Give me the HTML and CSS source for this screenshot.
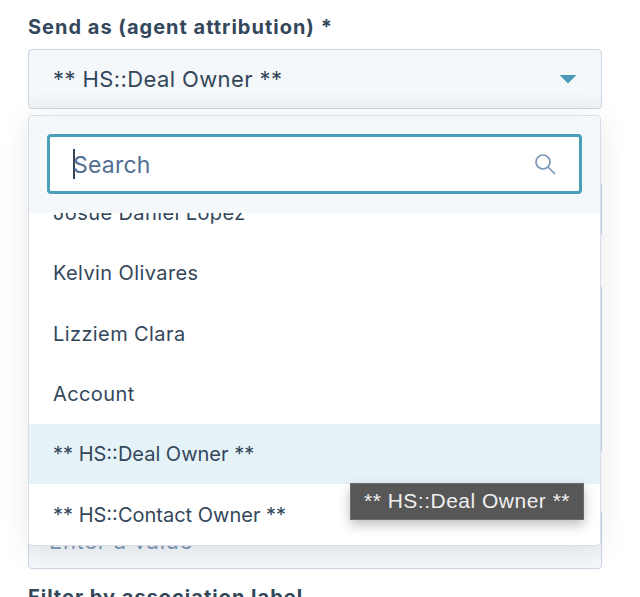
FILE: index.html
```html
<!DOCTYPE html>
<html lang="en">
<head>
<meta charset="utf-8">
<title>Send as</title>
<link rel="stylesheet" href="styles.css">
</head>
<body>
<main class="form">
  <div class="field">
    <label class="label">Send as (agent attribution) *</label>
    <div class="select">
      <span>** HS::Deal Owner **</span>
      <svg class="caret" width="18" height="10" viewBox="0 0 18 10"><path d="M0.5 1h17L9 9.5z" fill="#4a9cb6"/></svg>
    </div>
  </div>
  <div class="under">
    <div class="under-box short"></div>
    <div class="under-box tall"></div>
    <div class="under-box value"><span class="placeholder">Enter a value</span></div>
  </div>
  <label class="label last">Filter by association label</label>
</main>

<div class="dropdown">
  <div class="search-wrap">
    <div class="search">
      <span class="cursor"></span>
      <span class="search-text">Search</span>
      <svg class="search-icon" width="24" height="24" viewBox="0 0 24 24" fill="none" stroke="#7c98b6" stroke-width="1.7"><circle cx="10" cy="10" r="7"/><path d="M15 15l7 7"/></svg>
    </div>
  </div>
  <ul class="list">
    <li class="item">Josue Daniel Lopez</li>
    <li class="item">Kelvin Olivares</li>
    <li class="item">Lizziem Clara</li>
    <li class="item">Account</li>
    <li class="item owner active">** HS::Deal Owner **</li>
    <li class="item owner">** HS::Contact Owner **</li>
  </ul>
</div>
<div class="tooltip">** HS::Deal Owner **</div>
</body>
</html>
```
FILE: styles.css
```css
* { box-sizing: border-box; }
html, body { margin: 0; height: 597px; overflow: hidden; background: #fff; }
body { position: relative; font-family: "Inter", "Open Sans", sans-serif; color: #33475b; }
.form { padding: 14px 38px 0 28px; display: flex; flex-direction: column; }
.label { display: block; font-weight: 700; font-size: 20px; line-height: 26px; letter-spacing: 1px; color: #33475b; }
.select { margin-top: 9px; height: 60px; display: flex; align-items: center; justify-content: space-between; padding: 0 24px; background: linear-gradient(#f5f8fa 70%, #eff2f5); border: 1px solid #cbd6e2; border-radius: 4px; font-size: 22px; letter-spacing: 0.4px; }
.under { margin-top: 72px; display: flex; flex-direction: column; }
.under-box { background: linear-gradient(#eceef1, #f5f8fa); border: 1px solid #cbd6e2; border-radius: 4px; }
.short { height: 56px; }
.tall { height: 170px; margin-top: 47px; }
.value { height: 60px; margin-top: 55px; padding: 4px 20px 0; display: flex; align-items: center; }
.placeholder { color: #7c98b6; font-size: 22px; letter-spacing: 0.7px; }
.last { margin-top: 15px; }
.dropdown { position: absolute; left: 28px; top: 115px; width: 573px; height: 431px; background: #fff; border: 1px solid #d5dee8; border-radius: 4px; box-shadow: 0 4px 30px rgba(0,0,0,0.09); overflow: hidden; }
.search-wrap { height: 97px; padding: 18px 18px 0; background: #f5f8fa; position: relative; z-index: 1; }
.search { height: 60px; display: flex; align-items: center; background: #fff; border: 3px solid #4a9fba; border-radius: 4px; padding: 0 22px 0 23px; position: relative; }
.cursor { width: 2px; height: 30px; background: #33475b; margin-right: -2px; }
.search-text { font-size: 23px; line-height: 30px; padding-top: 2px; color: #516f90; letter-spacing: 0.2px; flex: 1; }
.list { list-style: none; margin: -30px 0 0; padding: 0; }
.item { height: 60.3px; padding: 0 24px; display: flex; align-items: center; font-size: 20px; letter-spacing: 0.4px; color: #33475b; }
.owner { letter-spacing: 0; }
.active { background: #e5f3f9; }
.tooltip { position: absolute; left: 350px; top: 483px; width: 234px; height: 37px; padding-bottom: 2px; background: #575757; border: 1px solid #6c6c6c; color: #f0f0f0; font-family: "Liberation Sans", sans-serif; font-size: 21px; letter-spacing: 0.5px; display: flex; align-items: center; justify-content: center; box-shadow: 0 5px 12px rgba(0,0,0,0.25); }
```
